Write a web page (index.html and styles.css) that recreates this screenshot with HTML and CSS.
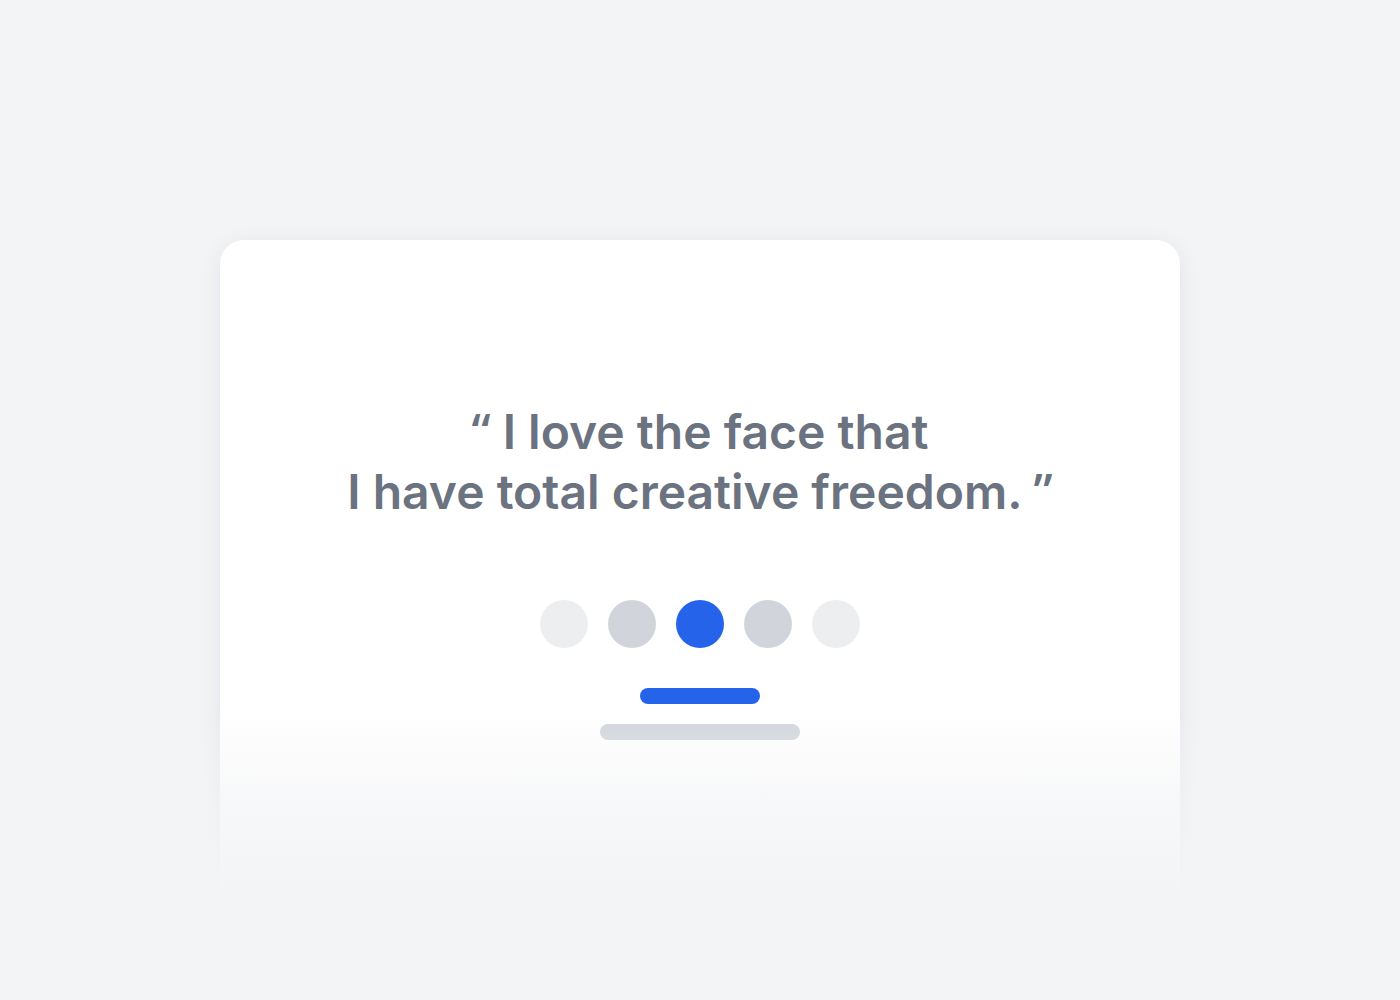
FILE: index.html
```html
<!DOCTYPE html>
<html lang="en">
<head>
<meta charset="utf-8">
<title>Testimonial</title>
<link rel="stylesheet" href="styles.css">
</head>
<body>
<div class="stage">
  <div class="card">
    <p class="quote"><span class="qmark">“</span> I love the face that<br>I have total creative freedom. <span class="qmark">”</span></p>
    <div class="dots">
      <span class="dot dot-faint"></span>
      <span class="dot dot-mid"></span>
      <span class="dot dot-active"></span>
      <span class="dot dot-mid"></span>
      <span class="dot dot-faint"></span>
    </div>
    <div class="bars">
      <span class="bar bar-blue"></span>
      <span class="bar bar-gray"></span>
    </div>
  </div>
  <div class="fade"></div>
</div>
</body>
</html>
```

FILE: styles.css
```css
html, body {
  margin: 0;
  padding: 0;
  background: #f3f4f6;
  height: 1000px;
  overflow: hidden;
}
body {
  font-family: Inter, "Noto Sans", sans-serif;
}
.stage {
  position: relative;
  width: 960px;
  margin: 240px auto 0;
}
.card {
  background: #ffffff;
  border-radius: 24px;
  box-shadow: 0 4px 24px rgba(17, 24, 39, 0.07);
  height: 700px;
  box-sizing: border-box;
  padding-top: 162px;
  display: flex;
  flex-direction: column;
  align-items: center;
}
.quote {
  margin: 0;
  font-size: 48px;
  line-height: 60px;
  font-weight: 600;
  color: #6b7280;
  text-align: center;
}
.qmark {
  font-family: "Open Sans", Inter, sans-serif;
  font-weight: 600;
  line-height: 1;
}
.dots {
  display: flex;
  gap: 20px;
  margin-top: 78px;
}
.dot {
  width: 48px;
  height: 48px;
  border-radius: 50%;
}
.dot-faint { background: #edeef0; }
.dot-mid { background: #d1d5db; }
.dot-active { background: #2563eb; }
.bars {
  display: flex;
  flex-direction: column;
  align-items: center;
  gap: 20px;
  margin-top: 40px;
}
.bar {
  height: 16px;
  border-radius: 8px;
}
.bar-blue { width: 120px; background: #2563eb; }
.bar-gray { width: 200px; background: #d1d5db; }
.fade {
  position: absolute;
  left: -60px;
  right: -60px;
  top: 470px;
  height: 280px;
  background: linear-gradient(to bottom, rgba(243, 244, 246, 0) 0%, rgba(243, 244, 246, 0.6) 30%, #f3f4f6 68%, #f3f4f6 100%);
}
```
